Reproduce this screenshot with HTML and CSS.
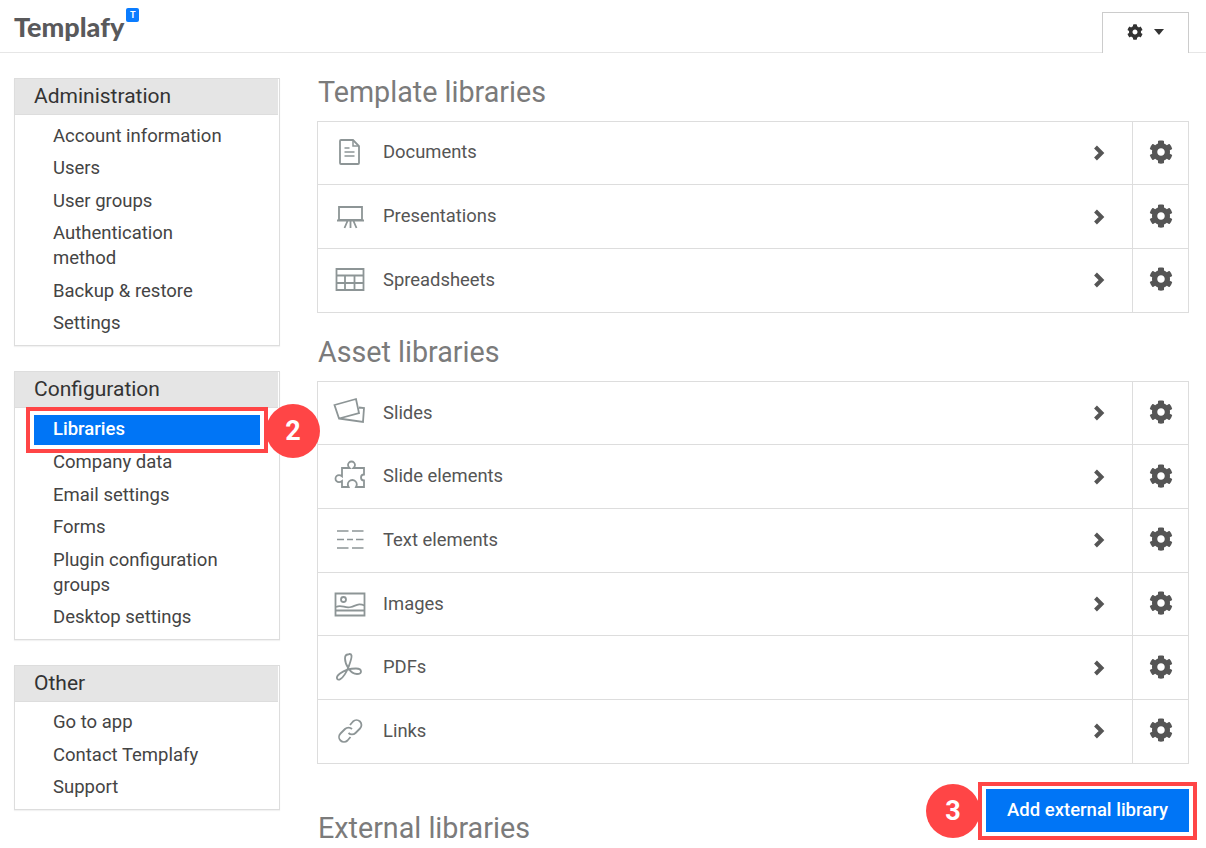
FILE: index.html
```html
<!DOCTYPE html>
<html lang="en">
<head>
<meta charset="utf-8">
<title>Templafy</title>
<link rel="stylesheet" href="styles.css">
</head>
<body>
<svg class="defs" width="0" height="0" aria-hidden="true">
  <symbol id="cog" viewBox="0 0 512 512"><path fill="currentColor" d="M487.4 315.7l-42.6-24.6c4.3-23.2 4.3-47 0-70.2l42.6-24.6c4.9-2.8 7.1-8.6 5.5-14-11.1-35.6-30-67.8-54.7-94.6-3.8-4.1-10-5.1-14.8-2.3L380.8 110c-17.9-15.4-38.5-27.3-60.8-35.1V25.8c0-5.6-3.9-10.5-9.4-11.7-36.7-8.2-74.3-7.8-109.2 0-5.5 1.2-9.4 6.1-9.4 11.7V75c-22.2 7.9-42.8 19.8-60.8 35.1L88.7 85.5c-4.9-2.8-11-1.9-14.8 2.3-24.7 26.7-43.6 58.9-54.7 94.6-1.7 5.4.6 11.2 5.5 14L67.3 221c-4.3 23.2-4.3 47 0 70.2l-42.6 24.6c-4.9 2.8-7.1 8.6-5.5 14 11.1 35.6 30 67.8 54.7 94.6 3.8 4.1 10 5.1 14.8 2.3l42.6-24.6c17.9 15.4 38.5 27.3 60.8 35.1v49.2c0 5.6 3.9 10.5 9.4 11.7 36.7 8.2 74.3 7.8 109.2 0 5.5-1.2 9.4-6.1 9.4-11.7v-49.2c22.2-7.9 42.8-19.8 60.8-35.1l42.6 24.6c4.9 2.8 11 1.9 14.8-2.3 24.7-26.7 43.6-58.9 54.7-94.6 1.5-5.5-.7-11.3-5.6-14.1zM256 336c-44.1 0-80-35.9-80-80s35.9-80 80-80 80 35.9 80 80-35.9 80-80 80z"/></symbol>
  <symbol id="chev" viewBox="0 0 14 18"><path d="M3.500 3l6 6-6 6" fill="none" stroke="currentColor" stroke-width="4"/></symbol>
</svg>

<header class="topbar">
  <div class="logo"><span class="logo-word">Templafy</span><span class="logo-badge">T</span></div>
  <div class="tab">
    <svg class="tab-cog"><use href="#cog"/></svg>
    <span class="caret"></span>
  </div>
</header>

<div class="page">
  <aside class="sidebar">
    <section class="panel">
      <h3 class="panel-head">Administration</h3>
      <ul class="menu">
        <li class="menu-item">Account information</li>
        <li class="menu-item">Users</li>
        <li class="menu-item">User groups</li>
        <li class="menu-item">Authentication method</li>
        <li class="menu-item">Backup &amp; restore</li>
        <li class="menu-item">Settings</li>
      </ul>
    </section>
    <section class="panel">
      <h3 class="panel-head">Configuration</h3>
      <ul class="menu">
        <li class="menu-item active">Libraries
          <span class="callout"></span>
          <span class="step step-side">2</span>
        </li>
        <li class="menu-item">Company data</li>
        <li class="menu-item">Email settings</li>
        <li class="menu-item">Forms</li>
        <li class="menu-item">Plugin configuration groups</li>
        <li class="menu-item">Desktop settings</li>
      </ul>
    </section>
    <section class="panel">
      <h3 class="panel-head">Other</h3>
      <ul class="menu">
        <li class="menu-item">Go to app</li>
        <li class="menu-item">Contact Templafy</li>
        <li class="menu-item">Support</li>
      </ul>
    </section>
  </aside>

  <main class="content">
    <h2 class="title">Template libraries</h2>
    <ul class="list">
      <li class="row">
        <span class="row-icon"><svg viewBox="0 0 36 36"><path d="M9 5h12l6 6v17a1 1 0 0 1-1 1H9a1 1 0 0 1-1-1V6a1 1 0 0 1 1-1z"/><path d="M21 5v6h6M12.500 13h5M12.500 17h10M12.500 21h10" stroke-width="1.500"/></svg></span>
        <span class="row-label">Documents</span>
        <svg class="chev"><use href="#chev"/></svg>
        <span class="row-gear"><svg class="gear"><use href="#cog"/></svg></span>
      </li>
      <li class="row">
        <span class="row-icon"><svg viewBox="0 0 36 36"><path d="M7 8h23v13H7zM5 21.500h27M18.500 22v7M15.500 22l-3 7M21.500 22l3 7"/></svg></span>
        <span class="row-label">Presentations</span>
        <svg class="chev"><use href="#chev"/></svg>
        <span class="row-gear"><svg class="gear"><use href="#cog"/></svg></span>
      </li>
      <li class="row">
        <span class="row-icon"><svg viewBox="0 0 36 36"><path d="M4.500 7h27v21h-27zM4.500 13.500h27M4.500 21h27M13 13.500V28M22.500 13.500V28"/></svg></span>
        <span class="row-label">Spreadsheets</span>
        <svg class="chev"><use href="#chev"/></svg>
        <span class="row-gear"><svg class="gear"><use href="#cog"/></svg></span>
      </li>
    </ul>

    <h2 class="title">Asset libraries</h2>
    <ul class="list">
      <li class="row">
        <span class="row-icon"><svg viewBox="0 0 36 36"><path d="M2.500 10L24 4l3 14-20 5.500zM27 12.500l5 .5-1 14-24-3.500"/></svg></span>
        <span class="row-label">Slides</span>
        <svg class="chev"><use href="#chev"/></svg>
        <span class="row-gear"><svg class="gear"><use href="#cog"/></svg></span>
      </li>
      <li class="row">
        <span class="row-icon"><svg viewBox="0 0 36 36"><path d="M10 9h7.500c-1-1-1.500-2-1.500-3a3.500 3.500 0 0 1 7 0c0 1-.5 2-1.500 3H32v6.500a3 3 0 0 0 0 6V28h-8c.5-1 .8-1.500.8-2.500a4.500 4.500 0 0 0-9 0c0 1 .3 1.500.8 2.500H10v-6c-1 .8-2 1.200-3 1.200a3.500 3.500 0 0 1 0-7c1 0 2 .4 3 1.200z"/></svg></span>
        <span class="row-label">Slide elements</span>
        <svg class="chev"><use href="#chev"/></svg>
        <span class="row-gear"><svg class="gear"><use href="#cog"/></svg></span>
      </li>
      <li class="row">
        <span class="row-icon"><svg viewBox="0 0 36 36"><path d="M5 9h11.500M20 9h11.500M5 17.500h7M15 17.500h6M24 17.500h7.500M5 26h11.500M20 26h11.500" stroke-width="1.500"/></svg></span>
        <span class="row-label">Text elements</span>
        <svg class="chev"><use href="#chev"/></svg>
        <span class="row-gear"><svg class="gear"><use href="#cog"/></svg></span>
      </li>
      <li class="row">
        <span class="row-icon"><svg viewBox="0 0 36 36"><path d="M3.500 7.500h29v22h-29zM3.500 24.500h29"/><circle cx="11.500" cy="13.500" r="2.500"/><path d="M4 21c6-3 9 2 15 0s8-4 13.500-1.500"/></svg></span>
        <span class="row-label">Images</span>
        <svg class="chev"><use href="#chev"/></svg>
        <span class="row-gear"><svg class="gear"><use href="#cog"/></svg></span>
      </li>
      <li class="row">
        <span class="row-icon"><svg viewBox="0 0 36 36"><path d="M16 4.500c-2.200 0-3 2-3 4 0 3 1.500 7 3.500 10 2 3 5 5.500 8.500 5.500 2.500 0 4-1 4-2.500 0-2-2.500-3-5-3-5 0-12 2-16 5-2 1.500-3.500 3.500-3 5 .5 1.500 2 1.500 3.500.5 3-2 6-7 8-12 1.500-4 3.500-9 3-11.500-.3-1.500-1-1.500-2-1.500z"/></svg></span>
        <span class="row-label">PDFs</span>
        <svg class="chev"><use href="#chev"/></svg>
        <span class="row-gear"><svg class="gear"><use href="#cog"/></svg></span>
      </li>
      <li class="row">
        <span class="row-icon"><svg viewBox="0 0 36 36"><path d="M18 12l3-3.500a4.900 4.900 0 0 1 7 7l-4.500 4.500a4.900 4.900 0 0 1-7 0M18.500 24l-3 3.500a4.900 4.900 0 0 1-7-7l4.500-4.500a4.900 4.900 0 0 1 7 0"/></svg></span>
        <span class="row-label">Links</span>
        <svg class="chev"><use href="#chev"/></svg>
        <span class="row-gear"><svg class="gear"><use href="#cog"/></svg></span>
      </li>
    </ul>

    <div class="external">
      <h2 class="title title-ext">External libraries</h2>
      <div class="action">
        <span class="step step-btn">3</span>
        <span class="callout callout-btn"></span>
        <button class="btn" type="button">Add external library</button>
      </div>
    </div>
  </main>
</div>
</body>
</html>
```

FILE: styles.css
```css
* { box-sizing: border-box; }
html, body { margin: 0; height: 848px; overflow: hidden; background: #fff; }
body { font-family: Roboto, "Liberation Sans", sans-serif; color: #444; }
ul { list-style: none; margin: 0; padding: 0; }
.defs { display: block; height: 0; }

.topbar { height: 53px; border-bottom: 1px solid #e6e6e6; display: flex; justify-content: space-between; align-items: flex-end; padding: 0 17px 0 14px; }
.logo { display: flex; align-self: flex-start; height: 52px; }
.logo-word { font-family: Lato, sans-serif; font-weight: 900; font-size: 27px; line-height: 30px; color: #59595b; margin-top: 12px; }
.logo-badge { width: 13px; height: 14px; margin: 8px 0 0 2px; background: #0a7cff; border-radius: 2px; color: #fff; font-size: 9px; font-weight: 700; line-height: 14px; text-align: center; }
.tab { width: 87px; height: 41px; margin-bottom: -1px; background: #fff; border: 1px solid #ccc; border-bottom: 0; display: flex; align-items: center; padding: 0 0 2px 24px; gap: 11px; }
.tab-cog { width: 16px; height: 16px; color: #333; }
.caret { width: 0; height: 0; border-left: 5.5px solid transparent; border-right: 5.5px solid transparent; border-top: 6px solid #333; }

.page { display: flex; padding-left: 14px; }
.sidebar { width: 266px; padding-top: 25px; display: flex; flex-direction: column; gap: 25px; flex: none; }
.panel { border: 1px solid #ddd; box-shadow: 0 1px 1px rgba(0,0,0,.05); }
.panel-head { margin: 0 1px 0 0; height: 36px; padding-left: 19px; background: #e5e5e5; font-size: 21px; font-weight: 400; line-height: 34px; color: #333; border-bottom: 1px solid #ddd; }
.menu { padding: 5px 0 4.5px; }
.menu-item { padding: 3.75px 50px 3.75px 38px; font-size: 18.5px; line-height: 25px; color: #444; }
.menu-item.active { position: relative; height: 30px; margin: 2px 19px 2px 19px; padding: 2px 0 0 19px; background: #0075f6; color: #fff; font-weight: 500; }

.callout { position: absolute; inset: -8px; border: 4px solid #ff4546; z-index: 2; }
.step { position: absolute; width: 54px; height: 54px; border-radius: 50%; background: #ff4546; color: #fff; font-size: 27px; font-weight: 700; line-height: 54px; text-align: center; z-index: 1; }
.step-side { left: 232px; top: -11px; }

.content { width: 872px; margin-left: 37px; flex: none; }
.title { margin: 21px 0 10.6px 1px; font-size: 28.7px; font-weight: 400; line-height: 36px; color: #7b7b7b; }
.list + .title { margin-top: 21.6px; }
.list { border: 1px solid #ddd; border-bottom: 0; }
.row { height: 63.67px; border-bottom: 1px solid #ddd; display: flex; align-items: center; color: #555; }
.row-icon { width: 65px; flex: none; display: flex; padding-left: 14px; }
.row-icon svg { width: 36px; height: 36px; fill: none; stroke: #8d9596; stroke-width: 1.8; }
.row-label { flex: 1; font-size: 18.4px; line-height: 25px; padding-bottom: 2px; }
.chev { width: 14px; height: 18px; margin: 0 26px 0 0; color: #555; }
.row-gear { width: 56px; height: 100%; flex: none; border-left: 1px solid #ddd; display: flex; align-items: center; justify-content: center; padding-bottom: 2px; }
.gear { width: 24px; height: 24px; color: #555; }

.external { display: flex; justify-content: space-between; align-items: flex-start; padding-top: 25px; }
.title-ext { margin: 21px 0 0 1px; }
.action { position: relative; display: flex; }
.btn { width: 203px; height: 43px; border: 0; background: #0075f6; color: #fff; font-family: Roboto, sans-serif; font-size: 18.5px; font-weight: 500; padding: 0; }
.callout-btn { inset: -7px -8px -8px -8px; }
.step-btn { left: -60px; top: -5px; }
```
